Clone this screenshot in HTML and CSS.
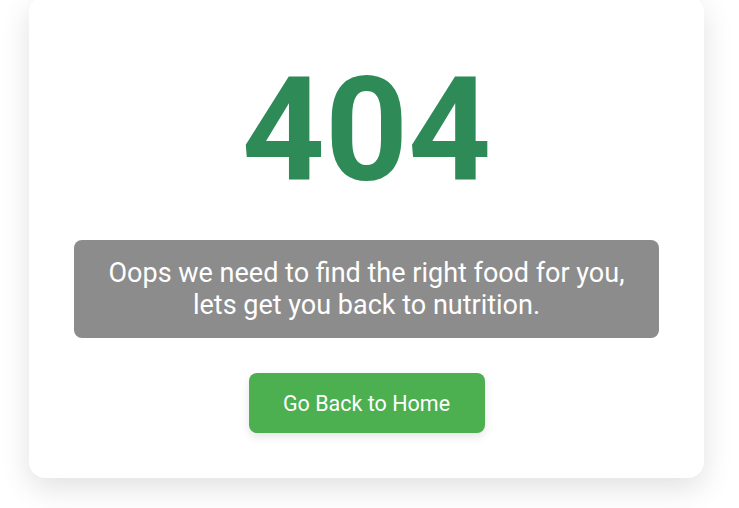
FILE: index.html
```html
<!DOCTYPE html>
<html lang="en">
<head>
<meta charset="utf-8">
<title>404</title>
<link rel="stylesheet" href="styles.css">
</head>
<body>
<main class="card">
  <h1 class="code">404</h1>
  <p class="message">Oops we need to find the right food for you,<br>lets get you back to nutrition.</p>
  <a class="home-btn" href="#">Go Back to Home</a>
</main>
</body>
</html>
```

FILE: styles.css
```css
html, body {
  margin: 0;
  padding: 0;
  background: #ffffff;
  font-family: Roboto, "Liberation Sans", sans-serif;
}

body {
  overflow: hidden;
  height: 508px;
}

.card {
  box-sizing: border-box;
  width: 675px;
  margin: -4px 0 0 29px;
  padding: 62px 45px 45px;
  background: #ffffff;
  border-radius: 16px;
  box-shadow: 0 10px 30px rgba(0, 0, 0, 0.12);
  display: flex;
  flex-direction: column;
  align-items: center;
}

.code {
  margin: 0;
  font-size: 145px;
  line-height: 144px;
  font-weight: 700;
  color: #2e8b57;
}

.message {
  box-sizing: border-box;
  align-self: stretch;
  height: 98px;
  margin: 38px 0 0;
  padding: 16.5px 20px;
  background: #8c8c8c;
  color: #ffffff;
  border-radius: 8px;
  font-size: 27px;
  line-height: 32.5px;
  text-align: center;
}

.home-btn {
  display: flex;
  align-items: center;
  justify-content: center;
  margin-top: 35px;
  width: 236px;
  height: 60px;
  background: #4caf50;
  color: #ffffff;
  text-decoration: none;
  font-size: 21.5px;
  border-radius: 8px;
  box-shadow: 0 4px 10px rgba(0, 0, 0, 0.1);
}
```
